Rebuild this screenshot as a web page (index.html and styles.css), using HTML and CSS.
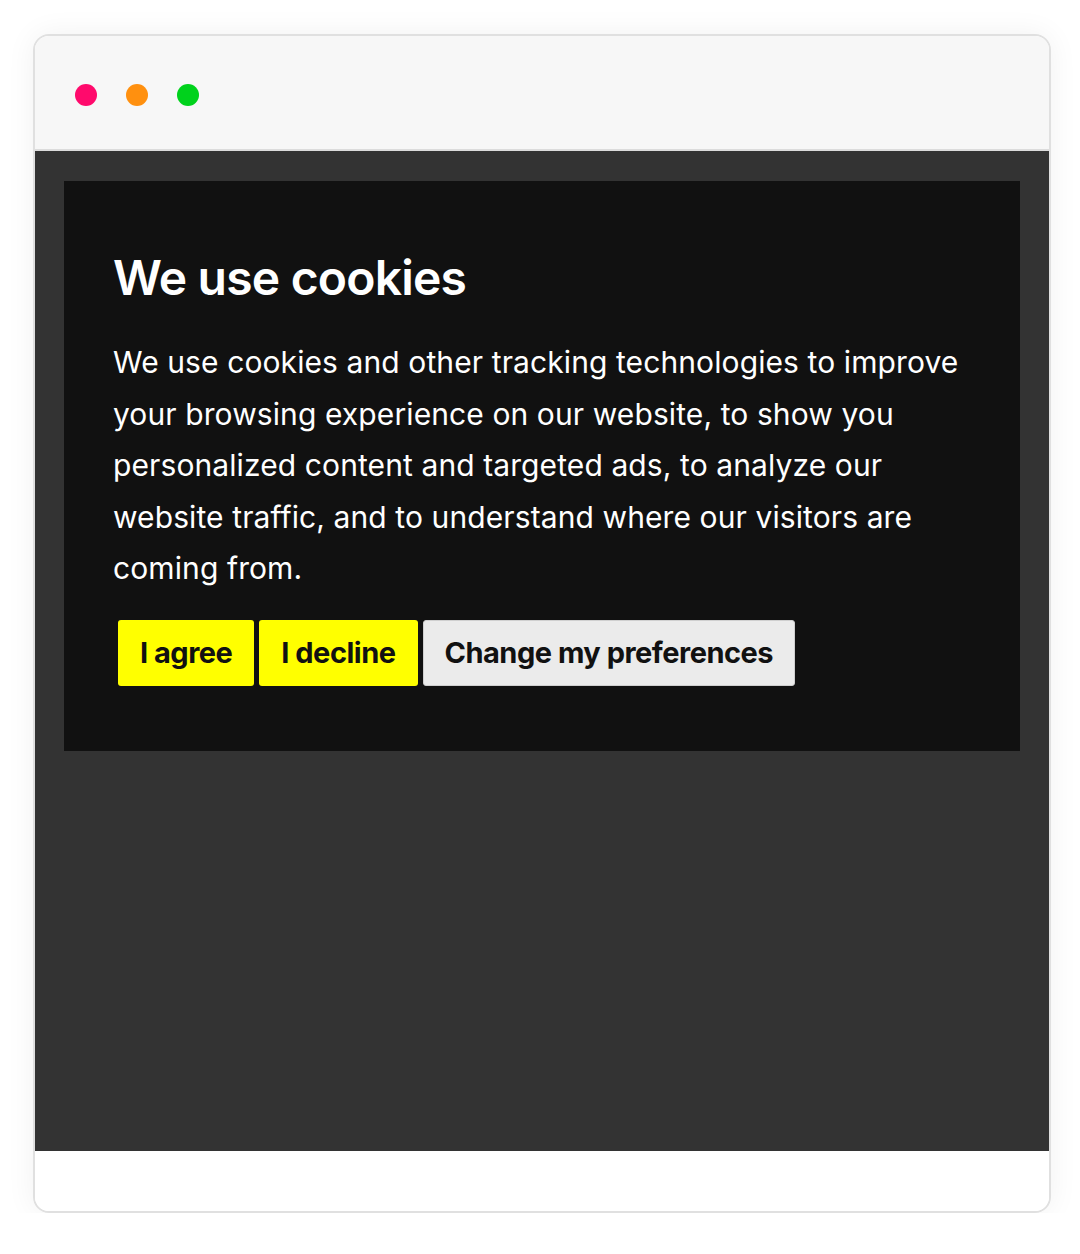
FILE: index.html
```html
<!DOCTYPE html>
<html>
<head>
<meta charset="utf-8">
<title>Cookie consent</title>
<link rel="stylesheet" href="styles.css">
</head>
<body>
    <div class="window">
        <div class="titlebar">
            <span class="dot red"></span>
            <span class="dot orange"></span>
            <span class="dot green"></span>
        </div>
        <div class="screen">
            <div class="cookie-box">
                <h1>We use cookies</h1>
                <p>We use cookies and other tracking technologies to improve your browsing experience on our website, to show you personalized content and targeted ads, to analyze our website traffic, and to understand where our visitors are coming from.</p>
                <div class="buttons">
                    <button class="btn yellow">I agree</button>
                    <button class="btn yellow">I decline</button>
                    <button class="btn grey">Change my preferences</button>
                </div>
            </div>
        </div>
        <div class="footer"></div>
    </div>
</body>
</html>
```

FILE: styles.css
```css
* {
    margin: 0;
    padding: 0;
    box-sizing: border-box;
}

body {
    font-family: 'Inter', 'Liberation Sans', sans-serif;
    background: #fff;
    padding: 34px 29px 0 33px;
}

.window {
    width: 1018px;
    border: 2px solid #e0e0e0;
    border-radius: 16px;
    overflow: hidden;
    box-shadow: 0 0 30px rgba(0, 0, 0, 0.06);
}

.titlebar {
    height: 115px;
    background-color: #f7f7f7;
    border-bottom: 2px solid #dcdcdc;
    display: flex;
    align-items: center;
    gap: 29px;
    padding-left: 40px;
    padding-top: 4px;
}

.dot {
    width: 22px;
    height: 22px;
    border-radius: 50%;
}

.dot.red { background-color: #ff0a6c; }
.dot.orange { background-color: #ff900f; }
.dot.green { background-color: #00d21c; }

.screen {
    background-color: #333;
    height: 1000px;
    padding: 30px 29px;
}

.cookie-box {
    background-color: #111;
    color: #fff;
    padding: 68px 40px 65px 49px;
}

.cookie-box h1 {
    font-size: 48px;
    font-weight: 600;
    letter-spacing: -0.8px;
    line-height: 58px;
    margin-bottom: 30px;
}

.cookie-box p {
    font-size: 30px;
    line-height: 51.5px;
    letter-spacing: 0.1px;
    margin-bottom: 25px;
}

.buttons {
    display: flex;
    gap: 5px;
    padding-left: 5px;
}

.btn {
    font-family: 'Inter', 'Liberation Sans', sans-serif;
    font-size: 29px;
    font-weight: 700;
    letter-spacing: -0.5px;
    height: 66px;
    padding: 0 21px;
    border: 1px solid transparent;
    border-radius: 3px;
    color: #111;
    cursor: pointer;
}

.btn.yellow {
    background-color: #ffff00;
}

.btn.grey {
    background-color: #ebebeb;
    border-color: #cfcfcf;
}

.footer {
    height: 60px;
    background-color: #fff;
}
```
